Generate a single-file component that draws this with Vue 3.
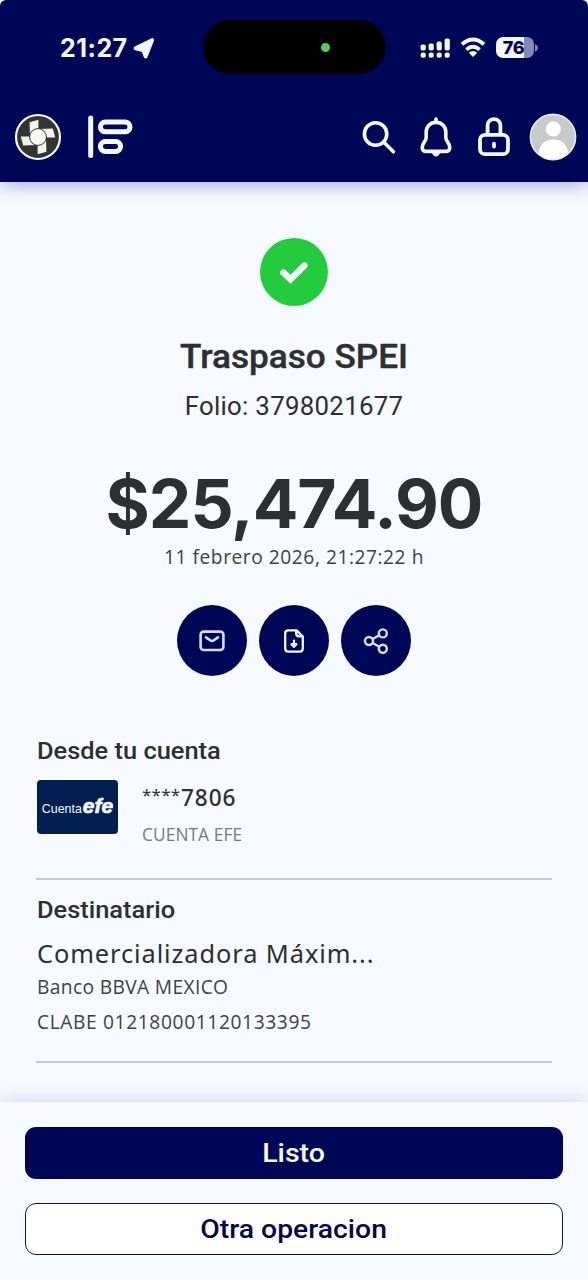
<script setup>
const from = { mask: '****', digits: '7806', type: 'CUENTA EFE' }
const to = {
  name: 'Comercializadora Máxim...',
  bank: 'Banco BBVA MEXICO',
  clabe: 'CLABE 012180001120133395',
}
const bars = [
  { x: 1, h: 6 },
  { x: 9, h: 7 },
  { x: 17, h: 9 },
  { x: 25, h: 12 },
]
</script>

<template>
  <div class="screen">
    <header class="header">
      <div class="status">
        <div class="clock">
          <span class="time">21:27</span>
          <svg class="arrow" width="22" height="22" viewBox="0 0 22 22">
            <path d="M19 3.2 12.6 19.4 10.4 13.2 2.6 11.4Z" fill="#f4f7ff" stroke="#f4f7ff" stroke-width="4" stroke-linejoin="round" />
          </svg>
        </div>
        <div class="island"><i class="dot"></i></div>
        <div class="signals">
          <svg class="cell" width="31" height="22" viewBox="0 0 31 22">
            <g fill="#f4f7ff">
              <rect v-for="b in bars" :key="b.x" :x="b.x - 0.4" :y="13.5 - b.h" width="5.2" :height="b.h" rx="1.8" />
              <rect v-for="b in bars" :key="'d' + b.x" :x="b.x - 0.4" y="15.4" width="5.2" height="5.4" rx="2.3" />
            </g>
          </svg>
          <svg class="wifi" width="26" height="21" viewBox="0 0 26 21" fill="none" stroke="#f4f7ff" stroke-width="3.8">
            <path d="M2 7.2Q13-2.4 24 7.2" />
            <path d="M6.4 12.6Q13 6.8 19.6 12.6" />
            <path d="M13 20 8.8 15.8Q13 12.4 17.2 15.8Z" fill="#f4f7ff" stroke="none" />
          </svg>
          <div class="battery"><span>76</span></div>
          <svg class="nub" width="3" height="8" viewBox="0 0 3 8"><path d="M0 0Q3 1.5 3 4T0 8Z" fill="#8587b4" /></svg>
        </div>
      </div>

      <nav class="nav">
        <svg class="logo" width="48" height="48" viewBox="0 0 48 48">
          <circle cx="24" cy="24" r="22" fill="#333532" stroke="#f4f7ff" stroke-width="2.2" />
          <g fill="#f3f3ee">
            <path d="M15.6 9.2 24.4 6.8V18L16 23Z" />
            <path d="M38.8 15.6 41.2 24.4H30L25 16Z" />
            <path d="M32.4 38.8 23.6 41.2V30L32 25Z" />
            <path d="M9.2 32.4 6.8 23.6H18L23 32Z" />
          </g>
          <circle cx="24" cy="24" r="8.4" fill="#f8f8f8" stroke="#333532" stroke-width="1" />
        </svg>
        <svg class="menu" width="48" height="46" viewBox="0 0 48 46" fill="none" stroke="#f4f7ff">
          <path d="M4.7 4V41.5" stroke-width="5" stroke-linecap="round" />
          <rect x="14.4" y="8" width="29.6" height="9.8" rx="4.9" stroke-width="5" />
          <rect x="14.4" y="27.6" width="20.2" height="9.8" rx="4.9" stroke-width="5" />
        </svg>
        <span class="spacer"></span>
        <svg class="search" width="36" height="36" viewBox="0 0 36 36" fill="none" stroke="#f4f7ff" stroke-width="3.6" stroke-linecap="round">
          <circle cx="14.6" cy="15" r="11.2" />
          <path d="M22.6 23 32.4 32.8" />
        </svg>
        <svg class="bell" width="34" height="40" viewBox="0 0 34 40" fill="none" stroke="#f4f7ff" stroke-width="3.6" stroke-linejoin="round" stroke-linecap="round">
          <path d="M17 2V5" />
          <path d="M17 5.4C11 5.4 7.2 9.7 7.2 15V20.5C7.2 24.5 3.2 26 3.2 30.2 3.2 33 5 34.4 7.7 34.4H26.3C29 34.4 30.8 33 30.8 30.2 30.8 26 26.8 24.5 26.8 20.5V15C26.8 9.7 23 5.4 17 5.4Z" />
          <path d="M12.8 35.5H21.2Q19.8 39.6 17 39.6T12.8 35.5Z" fill="#f4f7ff" stroke="none" />
        </svg>
        <svg class="lock" width="34" height="40" viewBox="0 0 34 40" fill="none" stroke="#f4f7ff" stroke-width="3.8">
          <rect x="3" y="17.8" width="28" height="19.4" rx="5" />
          <path d="M10.6 18V8.2A6.4 6 0 0 1 23.4 8.2V18" />
          <path d="M17 26.6V29.6" stroke-linecap="round" />
        </svg>
        <svg class="avatar" width="48" height="48" viewBox="0 0 48 48">
          <circle cx="24" cy="24" r="22.6" fill="#c8c9c9" stroke="#e7eafa" stroke-width="1.6" />
          <circle cx="24.3" cy="16" r="7.6" fill="#fff" />
          <path d="M9.3 40C11.5 30.5 16.5 26.6 24.3 26.6S37.5 30.5 39.3 39.6Q33 46.2 24 46.2T9.3 40Z" fill="#fff" />
        </svg>
      </nav>
    </header>

    <main class="body">
      <svg class="check" width="68" height="68" viewBox="0 0 68 68">
        <circle cx="34" cy="34" r="34" fill="#24cb3e" />
        <path d="M23.4 34.7 30.6 41.4 44.4 27.6" fill="none" stroke="#fbfffb" stroke-width="6.4" stroke-linecap="round" stroke-linejoin="miter" />
      </svg>
      <h1 class="title"><span>Traspaso SPEI</span></h1>
      <p class="folio"><span>Folio: 3798021677</span></p>
      <p class="amount"><span>$25,474.90</span></p>
      <p class="date"><span>11 febrero 2026, 21:27:22 h</span></p>

      <div class="actions">
        <button class="round">
          <svg width="26" height="22" viewBox="0 0 26 22" fill="none" stroke="#d8dcfa" stroke-width="2.6" stroke-linecap="round" stroke-linejoin="round">
            <rect x="1.6" y="1.6" width="22.8" height="18.4" rx="3.2" />
            <path d="M7 7.4 11.2 10.3Q13 11.4 14.8 10.3L19 7.4" />
          </svg>
        </button>
        <button class="round">
          <svg width="22" height="26" viewBox="0 0 22 26" fill="none" stroke="#f4f7ff" stroke-width="2.3" stroke-linecap="round" stroke-linejoin="round">
            <path d="M13.6 2.4H5.2Q2.2 2.4 2.2 5.4V20.6Q2.2 23.6 5.2 23.6H16.8Q19.8 23.6 19.8 20.6V8.6Z" />
            <path d="M13.2 2.6V5.6Q13.2 8.4 16 8.4H19.4" />
            <path d="M11 12.6V17.6M8.6 16.2 11 18.8 13.4 16.2Z" />
          </svg>
        </button>
        <button class="round">
          <svg width="26" height="28" viewBox="0 0 26 28" fill="none" stroke="#d8dcfa" stroke-width="2.4">
            <circle cx="6" cy="14" r="4" />
            <circle cx="19.8" cy="6.4" r="4" />
            <circle cx="19.8" cy="21.8" r="4" />
            <path d="M9.6 12 16.2 8.4M9.6 16 16.2 19.8" />
          </svg>
        </button>
      </div>

      <section class="from">
        <h2 class="label"><span>Desde tu cuenta</span></h2>
        <div class="account">
          <div class="card"><span class="cuenta">Cuenta</span><span class="efe">efe</span></div>
          <div class="info">
            <p class="number"><span class="mask">{{ from.mask }}</span><span class="digits">{{ from.digits }}</span></p>
            <p class="type"><span>{{ from.type }}</span></p>
          </div>
        </div>
      </section>

      <section class="to">
        <h2 class="label"><span>Destinatario</span></h2>
        <p class="name"><span>{{ to.name }}</span></p>
        <p class="bank"><span>{{ to.bank }}</span></p>
        <p class="clabe"><span>{{ to.clabe }}</span></p>
      </section>
    </main>

    <footer class="footer">
      <button class="btn primary"><span>Listo</span></button>
      <button class="btn secondary"><span>Otra operacion</span></button>
    </footer>
  </div>
</template>

<style>
body { background: #fff; }
</style>

<style scoped>
* { box-sizing: border-box; }
h1, h2, p { margin: 0; font-weight: 400; white-space: nowrap; }
svg { display: block; flex: none; }
button { padding: 0; border: 0; font: inherit; }

.screen {
  width: 588px;
  height: 1280px;
  display: flex;
  flex-direction: column;
  overflow: hidden;
  border-radius: 6px 6px 0 0;
  background: #f6fafe;
  color: #2d2f31;
  font-family: Roboto, "Liberation Sans", sans-serif;
}

.header {
  flex: none;
  height: 182px;
  background: #000656;
  box-shadow: 0 2px 18px rgba(20, 30, 140, 0.38);
}
.status {
  height: 95px;
  display: grid;
  grid-template-columns: 203px 183px 1fr;
  align-items: center;
}
.clock { display: flex; align-items: center; padding-left: 60px; gap: 5px; }
.time {
  font: 700 25px/28px Inter, sans-serif;
  letter-spacing: 0.5px;
  color: #f4f7ff;
  width: 68px;
}
.island {
  height: 54px;
  margin-bottom: 1px;
  border-radius: 27px;
  background: #000;
  display: flex;
  align-items: center;
  justify-content: flex-end;
  padding-right: 56px;
}
.dot { width: 9px; height: 9px; border-radius: 50%; background: #4fcb6c; }
.signals { display: flex; align-items: center; padding-left: 34px; }
.wifi { margin-left: 9px; }
.battery {
  margin-left: 10px;
  width: 38px;
  height: 21px;
  border-radius: 7px;
  background: linear-gradient(90deg, #f4f7ff 74%, #8587b4 74%);
  color: #00054e;
  font: 800 18px/21px Inter, sans-serif;
  text-align: center;
  padding-right: 3px;
  letter-spacing: -0.4px;
}
.nub { margin-left: 1px; }

.nav { display: flex; align-items: center; height: 83px; padding: 0 11px 0 14px; }
.menu { margin-left: 24px; }
.spacer { flex: 1; }
.search { margin-right: 22px; }
.bell { margin-right: 24px; }
.lock { margin-right: 18px; }

.body { flex: none; height: 920px; padding: 56px 36px 0; display: flex; flex-direction: column; }
.check { align-self: center; }
.title, .folio, .amount, .date { text-align: center; }
.title span, .label span, .btn span { display: inline-block; }
.title { margin-top: 31px; font-weight: 500; font-size: 33px; line-height: 40px; }
.title span { transform: scaleX(1.065); -webkit-text-stroke: 0.4px #2d2f31; }
.folio { margin-top: 11px; font-size: 25.8px; line-height: 36px; letter-spacing: 0.3px; }
.amount { margin-top: 40px; font-family: Inter, sans-serif; font-weight: 700; font-size: 67.6px; line-height: 80px; letter-spacing: -1px; }
.date { margin-top: 1px; font-family: "Open Sans", sans-serif; font-size: 19.2px; line-height: 24px; letter-spacing: 0.54px; color: #3f4244; }

.actions { display: flex; justify-content: center; gap: 12px; margin-top: 36px; }
.round {
  width: 70px;
  height: 71px;
  border-radius: 50%;
  background: #000656;
  display: flex;
  align-items: center;
  justify-content: center;
}

.label { font-weight: 500; font-size: 23px; line-height: 30px; padding-left: 1px; }
.label span { transform: scaleX(1.105); transform-origin: 0 50%; }
.from { margin-top: 61px; height: 143px; border-bottom: 2px solid #c5c9ce; }
.account { display: flex; gap: 24px; margin-top: 13px; padding-left: 1px; }
.card {
  flex: none;
  width: 81px;
  height: 54px;
  border-radius: 4px;
  background: #031e50;
  color: #f4f7ff;
  display: flex;
  align-items: baseline;
  justify-content: center;
  gap: 1px;
  line-height: 52px;
  font-family: "Liberation Sans", Arial, sans-serif;
}
.cuenta { font-size: 12.4px; }
.efe { font-size: 21px; font-weight: 700; font-style: italic; -webkit-text-stroke: 0.7px #f4f7ff; }
.info { font-family: "Noto Sans", sans-serif; }
.number { display: flex; font-size: 22.6px; line-height: 36px; font-weight: 500; }
.mask { font-size: 17px; line-height: 30px; letter-spacing: 0.2px; width: 39px; font-weight: 400; }
.digits { letter-spacing: 0.9px; }
.type { font-family: "Open Sans", sans-serif; font-size: 17.3px; line-height: 24px; margin-top: 7px; color: #787b7e; letter-spacing: 0.1px; }

.to { height: 183px; border-bottom: 2px solid #c5c9ce; padding-top: 16px; }
.name, .bank, .clabe { padding-left: 1px; }
.name { margin-top: 9px; font-family: "Noto Sans", sans-serif; font-size: 25.4px; line-height: 36px; letter-spacing: 0.9px; }
.bank, .clabe { font-family: "Open Sans", sans-serif; font-size: 19.2px; line-height: 24px; color: #3f4244; }
.bank { margin-top: 4px; letter-spacing: 0.36px; }
.clabe { margin-top: 11px; letter-spacing: 0.62px; }

.footer {
  flex: 1;
  display: flex;
  flex-direction: column;
  gap: 24px;
  padding: 25px 25px 0;
  background: #f6fafe;
  box-shadow: 0 -2px 16px rgba(80, 70, 190, 0.2);
}
.btn { height: 52px; border-radius: 11px; font-size: 26px; font-weight: 500; line-height: 50px; }
.primary { background: #000656; color: #f6f9ff; }
.primary span { transform: scaleX(1.1); }
.secondary { background: #fff; color: #06064a; border: 1.5px solid #15153c; line-height: 48px; }
.secondary span { transform: scaleX(1.09); }
</style>
